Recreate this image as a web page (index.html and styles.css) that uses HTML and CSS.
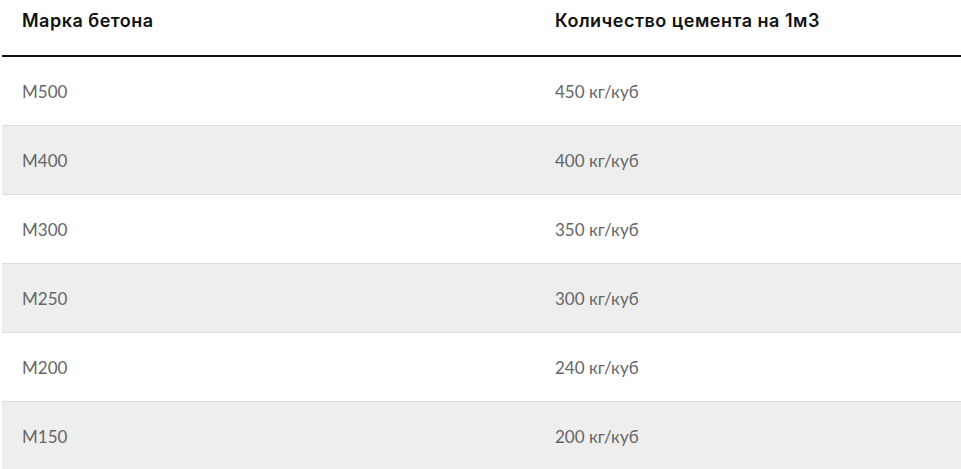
FILE: index.html
```
<!DOCTYPE html>
<html lang="ru">
<head>
<meta charset="utf-8">
<link rel="stylesheet" href="styles.css">
</head>
<body>
<table class="grades">
  <thead>
    <tr><th class="c1">Марка бетона</th><th class="c2">Количество цемента на 1м3</th></tr>
  </thead>
  <tbody>
    <tr><td>М500</td><td>450 кг/куб</td></tr>
    <tr class="alt"><td>М400</td><td>400 кг/куб</td></tr>
    <tr><td>М300</td><td>350 кг/куб</td></tr>
    <tr class="alt"><td>М250</td><td>300 кг/куб</td></tr>
    <tr><td>М200</td><td>240 кг/куб</td></tr>
    <tr class="alt"><td>М150</td><td>200 кг/куб</td></tr>
  </tbody>
</table>
</body>
</html>
```
FILE: styles.css
```
html, body { margin: 0; padding: 0; background: #fff; }
body { padding-left: 2px; }
.grades {
  width: 959px;
  border-collapse: collapse;
  table-layout: fixed;
}
.grades th {
  font-family: Inter, "Noto Sans", sans-serif;
  font-weight: 600;
  font-size: 18px;
  letter-spacing: 0.5px;
  color: #111;
  text-align: left;
  height: 56px;
  padding: 0 0 14px 20px;
  box-sizing: border-box;
  border-bottom: 2px solid #111;
  vertical-align: middle;
}
.grades .c1 { width: 533px; }
.grades td {
  font-family: Lato, "Noto Sans", sans-serif;
  font-weight: 400;
  font-size: 17px;
  color: #666;
  height: 68px;
  padding: 0 0 0 20px;
  border-bottom: 1px solid #dcdcdc;
  vertical-align: middle;
}
.grades tr.alt td { background: #eeeeee; }
```
